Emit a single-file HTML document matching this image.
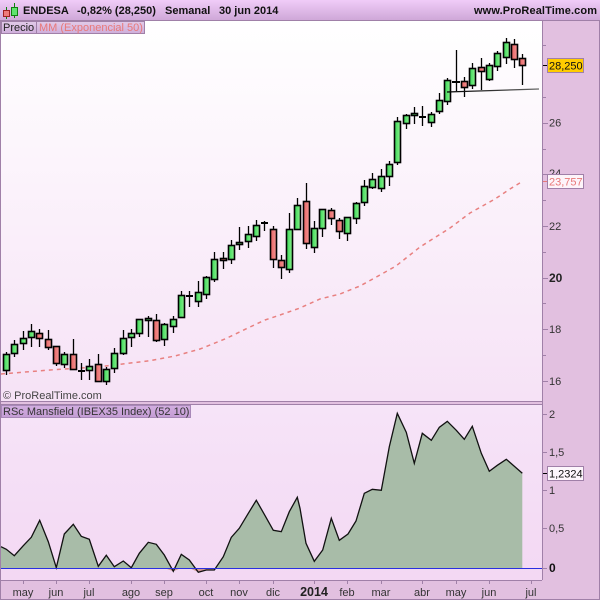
<!DOCTYPE html>
<html><head><meta charset="utf-8"><style>
html,body{margin:0;padding:0;background:#e2c0e0}
svg{display:block}
text{font-family:"Liberation Sans",sans-serif;font-size:11px;fill:#222}
.b{font-weight:bold;fill:#111}
.g{fill:url(#gg);stroke:#000;stroke-width:1.6}
.r{fill:url(#rr);stroke:#000;stroke-width:1.6}
.g rect,.r rect{shape-rendering:auto}
.w{stroke:#000;fill:none;stroke-width:1.3;shape-rendering:auto}
.t{stroke:#a080a8;fill:none}
.x{text-anchor:middle;fill:#333}
</style></head><body>
<svg width="600" height="600" viewBox="0 0 600 600" xmlns="http://www.w3.org/2000/svg" shape-rendering="crispEdges">
<defs>
<linearGradient id="gg" x1="0" y1="0" x2="1" y2="0"><stop offset="0" stop-color="#38d858"/><stop offset="1" stop-color="#8cf08c"/></linearGradient>
<linearGradient id="rr" x1="0" y1="0" x2="1" y2="0"><stop offset="0" stop-color="#e86464"/><stop offset="1" stop-color="#f49494"/></linearGradient>
<linearGradient id="hd" x1="0" y1="0" x2="0" y2="1"><stop offset="0" stop-color="#f0ccf8"/><stop offset="1" stop-color="#cfa8d8"/></linearGradient>
<linearGradient id="mb" x1="0" y1="0" x2="0" y2="1"><stop offset="0" stop-color="#ffffff"/><stop offset="1" stop-color="#f6e2f6"/></linearGradient>
<linearGradient id="pb" x1="0" y1="0" x2="0" y2="1"><stop offset="0" stop-color="#f6e4f8"/><stop offset="1" stop-color="#f3d8f3"/></linearGradient>
<linearGradient id="lg" x1="0" y1="0" x2="0" y2="1"><stop offset="0" stop-color="#e2cae8"/><stop offset="1" stop-color="#ceaedb"/></linearGradient>
<linearGradient id="rs" x1="0" y1="0" x2="0" y2="1"><stop offset="0" stop-color="#d2aee0"/><stop offset="1" stop-color="#c49cd4"/></linearGradient>
<linearGradient id="tl" x1="0" y1="0" x2="1" y2="0"><stop offset="0" stop-color="#000"/><stop offset="1" stop-color="#666"/></linearGradient>
<clipPath id="up"><rect x="0" y="404" width="542" height="164"/></clipPath>
<clipPath id="dn"><rect x="0" y="568" width="542" height="12"/></clipPath>
</defs>
<rect width="600" height="600" fill="#e2c0e0"/>
<rect x="0" y="0" width="600" height="20" fill="url(#hd)"/>
<path d="M0 20.5H600" stroke="#a080a8"/>
<rect x="1" y="21" width="541" height="380" fill="url(#mb)"/>
<rect x="1" y="405" width="541" height="175" fill="url(#pb)"/>
<path d="M0.5 20V600M542.5 20V580M599.5 20V600M0 401.5H542M0 404.5H542M0 580.5H542M0 599.5H600" stroke="#a080a8"/>

<!-- header icon -->
<path d="M6.5 7V19M14.5 3V18" stroke="#108010" fill="none"/>
<rect x="3.5" y="10.5" width="6" height="6" fill="#ee7b7b" stroke="#a02020"/>
<rect x="11.5" y="7.5" width="6" height="8" fill="#5fe36f" stroke="#108010"/>
<g shape-rendering="auto">
<text class="b" x="23" y="14">ENDESA</text>
<text class="b" x="77" y="14">-0,82% (28,250)</text>
<text class="b" x="165" y="14">Semanal</text>
<text class="b" x="219" y="14">30 jun 2014</text>
<text class="b" x="474" y="14" textLength="123">www.ProRealTime.com</text>
</g>

<!-- legends -->
<rect x="1.5" y="21.5" width="35" height="12" fill="url(#lg)" stroke="#a080a8"/>
<rect x="36.5" y="21.5" width="108" height="12" fill="url(#lg)" stroke="#a080a8"/>
<g shape-rendering="auto">
<text x="3" y="31">Precio</text>
<text x="39" y="31" style="fill:#e87878">MM (Exponencial 50)</text>
<text x="3" y="399" style="fill:#444">© ProRealTime.com</text>
</g>

<!-- moving average -->
<path shape-rendering="auto" fill="none" stroke="#e88080" stroke-width="1.5" stroke-dasharray="4 4" d="M1 374L50 370L100 366.7L150 360.7L175 356L200 349L225 339L250 327L265 320L280 315L300 308L320 299L340 294L360 286L380 275L396 266L420 247L450 228L470 213L495 199L510 189L523 181"/>

<!-- candles -->
<path class="w" d="M6.5 352V375M14.5 340V357M23.5 331V350M31.5 324V347M39.5 329V347M48.5 330V350M56.5 346V366M64.5 352V368M73.5 339V370M81.5 363V380M89.5 359V380M98.5 354V382M106.5 367V385M114.5 348V373M123.5 330V355M131.5 329V347M139.5 319V337M148.5 316V337M156.5 314V342M164.5 323V346M173.5 316V333M181.5 291V318M189.5 291V307M198.5 281V307M206.5 276V299M214.5 252V282M223.5 252V269M231.5 240V264M239.5 227V250M248.5 226V248M256.5 220V241M264.5 221V231M273.5 226V268M281.5 255V279M289.5 213V273M297.5 198V230M306.5 183V249M314.5 221V253M322.5 209V237M331.5 208V225M339.5 218V239M347.5 217V241M356.5 202V224M364.5 180V206M372.5 173V189M381.5 169V192M389.5 161V186M397.5 117V165M406.5 114V129M414.5 107V124M422.5 106V126M431.5 112V127M439.5 93V114M447.5 78V105M456.5 50V91M464.5 77V97M472.5 63V89M481.5 58V90M489.5 63V81M497.5 51V71M506.5 38V64M514.5 39V68M522.5 54V85"/>
<path stroke="#000" stroke-width="2" d="M78 371H85M186 296H193M261 223H268M419 117H426M452 82H460"/>
<g class="g">
<rect x="3.5" y="354.5" width="6" height="16"/><rect x="11.5" y="344.5" width="6" height="9"/><rect x="20.5" y="338.5" width="6" height="5"/><rect x="28.5" y="331.5" width="6" height="6"/>
<rect x="61.5" y="354.5" width="6" height="10"/><rect x="86.5" y="366.5" width="6" height="4"/><rect x="103.5" y="369.5" width="6" height="12"/><rect x="111.5" y="353.5" width="6" height="15"/><rect x="120.5" y="338.5" width="6" height="15"/><rect x="128.5" y="333.5" width="6" height="4"/><rect x="136.5" y="319.5" width="6" height="14"/><rect x="145.5" y="318.5" width="6" height="2"/>
<rect x="161.5" y="324.5" width="6" height="15"/><rect x="170.5" y="319.5" width="6" height="7"/><rect x="178.5" y="295.5" width="6" height="22"/><rect x="195.5" y="292.5" width="6" height="9"/><rect x="203.5" y="277.5" width="6" height="17"/><rect x="211.5" y="259.5" width="6" height="20"/><rect x="228.5" y="245.5" width="6" height="14"/><rect x="236.5" y="242.5" width="6" height="2"/><rect x="245.5" y="234.5" width="6" height="7"/><rect x="253.5" y="225.5" width="6" height="11"/>
<rect x="286.5" y="229.5" width="6" height="40"/><rect x="294.5" y="205.5" width="6" height="24"/><rect x="311.5" y="228.5" width="6" height="19"/><rect x="319.5" y="209.5" width="6" height="19"/><rect x="344.5" y="217.5" width="6" height="16"/><rect x="353.5" y="203.5" width="6" height="15"/><rect x="361.5" y="186.5" width="6" height="16"/><rect x="369.5" y="179.5" width="6" height="8"/><rect x="378.5" y="176.5" width="6" height="12"/><rect x="386.5" y="164.5" width="6" height="12"/><rect x="394.5" y="121.5" width="6" height="41"/><rect x="403.5" y="115.5" width="6" height="8"/><rect x="411.5" y="113.5" width="6" height="2"/><rect x="428.5" y="114.5" width="6" height="8"/><rect x="436.5" y="100.5" width="6" height="11"/><rect x="444.5" y="80.5" width="6" height="21"/><rect x="469.5" y="68.5" width="6" height="17"/><rect x="486.5" y="65.5" width="6" height="14"/><rect x="494.5" y="53.5" width="6" height="13"/><rect x="503.5" y="42.5" width="6" height="15"/>
</g>
<g class="r">
<rect x="36.5" y="333.5" width="6" height="5"/><rect x="45.5" y="339.5" width="6" height="8"/><rect x="53.5" y="346.5" width="6" height="17"/><rect x="70.5" y="354.5" width="6" height="15"/><rect x="95.5" y="364.5" width="6" height="17"/><rect x="153.5" y="320.5" width="6" height="20"/><rect x="220.5" y="258.5" width="6" height="2"/><rect x="270.5" y="229.5" width="6" height="30"/><rect x="278.5" y="260.5" width="6" height="7"/><rect x="303.5" y="201.5" width="6" height="42"/><rect x="328.5" y="210.5" width="6" height="8"/><rect x="336.5" y="220.5" width="6" height="11"/><rect x="461.5" y="81.5" width="6" height="6"/><rect x="478.5" y="67.5" width="6" height="4"/><rect x="511.5" y="44.5" width="6" height="15"/><rect x="519.5" y="58.5" width="6" height="7"/>
</g>

<!-- trend line -->
<path shape-rendering="auto" d="M447 92L539 89" stroke="url(#tl)" stroke-width="1.3" fill="none"/>

<!-- price axis -->
<path class="t" d="M543 45.5H546M543 97.5H546M543 149.5H546M543 123.5H548M543 174.5H548M543 226.5H548M543 278.5H548M543 329.5H548M543 381.5H548M543 200.5H546M543 252.5H546M543 303.5H546M543 355.5H546"/>
<g shape-rendering="auto">
<text x="549" y="126.5" style="fill:#333">26</text>
<text x="549" y="177" style="fill:#333">24</text>
<text x="549" y="230" style="fill:#333">22</text>
<text class="b" x="549" y="282" style="fill:#222;font-size:12px">20</text>
<text x="549" y="333" style="fill:#333">18</text>
<text x="549" y="385" style="fill:#333">16</text>
</g>
<path d="M543 65.5H548" stroke="#000"/>
<path d="M543 181.5H548" stroke="#e87878"/>
<rect x="547.5" y="58.5" width="36" height="14" fill="#ffcc00" stroke="#a080a8"/>
<rect x="547.5" y="174.5" width="36" height="14" fill="#fdf4fa" stroke="#a080a8"/>
<g shape-rendering="auto">
<text x="549" y="69.5" style="fill:#111">28,250</text>
<text x="549" y="185.5" style="fill:#e87878">23,757</text>
</g>

<!-- indicator label -->
<rect x="1.5" y="405.5" width="189" height="12" fill="url(#rs)" stroke="#a888b8"/>
<text shape-rendering="auto" x="3" y="415" style="fill:#333">RSc Mansfield (IBEX35 Index) (52 10)</text>

<!-- indicator -->
<g shape-rendering="auto">
<polygon clip-path="url(#up)" fill="#a8bca8" points="1,568.5 1,546.7 6.3,549.3 14.3,555.7 23.3,545.7 31.3,537.3 39.7,520.3 48.3,541.7 56.3,567.7 64.3,534 73.3,524.3 81.3,536.3 89.3,539.3 98.3,566.3 106.3,555.3 114.3,566.7 123.3,561 131.3,567.7 139.3,553.3 148.3,542.3 156.3,544.3 164.3,555 173.3,571.3 181.3,554.3 189.3,560 198.3,572.3 206.3,570 214.3,570 223.3,556.7 231.3,537.3 239.3,528.3 248.3,513.3 256.3,500.3 264.3,514.3 273.3,530.3 281.3,531.7 289.3,511.7 297.3,497.3 300,508.3 306,543.3 314.3,561.3 322.7,550 331.3,518.3 339.3,540.3 348,534 356,521 364.3,493.3 372.3,489.3 381.3,490.3 389.3,446.7 397.3,413.3 406.3,432.3 414.3,463.3 422.3,433.3 431.3,440.3 439.3,427.3 447.3,421.3 456.3,430.3 464.3,439.3 472.3,426.3 481.3,453.3 489.3,471.3 497.3,465.3 506.3,459.3 514.3,466.3 522.3,473.3 522.3,568.5"/>
<polygon clip-path="url(#dn)" fill="#d09898" points="164.3,568 173.3,571.3 181.3,568 189.3,568 198.3,572.3 206.3,570 214.3,570 218,568"/>
<polyline fill="none" stroke="#111" stroke-width="1.3" points="1,546.7 6.3,549.3 14.3,555.7 23.3,545.7 31.3,537.3 39.7,520.3 48.3,541.7 56.3,567.7 64.3,534 73.3,524.3 81.3,536.3 89.3,539.3 98.3,566.3 106.3,555.3 114.3,566.7 123.3,561 131.3,567.7 139.3,553.3 148.3,542.3 156.3,544.3 164.3,555 173.3,571.3 181.3,554.3 189.3,560 198.3,572.3 206.3,570 214.3,570 223.3,556.7 231.3,537.3 239.3,528.3 248.3,513.3 256.3,500.3 264.3,514.3 273.3,530.3 281.3,531.7 289.3,511.7 297.3,497.3 300,508.3 306,543.3 314.3,561.3 322.7,550 331.3,518.3 339.3,540.3 348,534 356,521 364.3,493.3 372.3,489.3 381.3,490.3 389.3,446.7 397.3,413.3 406.3,432.3 414.3,463.3 422.3,433.3 431.3,440.3 439.3,427.3 447.3,421.3 456.3,430.3 464.3,439.3 472.3,426.3 481.3,453.3 489.3,471.3 497.3,465.3 506.3,459.3 514.3,466.3 522.3,473.3"/>
</g>
<path d="M1 568.5H542" stroke="#2a30e0"/>

<!-- indicator axis -->
<path class="t" d="M543 414.5H547M543 452.5H547M543 490.5H547M543 528.5H547"/>
<path d="M543 568.5H547" stroke="#a080a8"/>
<path d="M543 473.5H548" stroke="#000"/>
<rect x="547.5" y="466.5" width="36" height="14" fill="#fdf6fc" stroke="#a080a8"/>
<g shape-rendering="auto">
<text x="549" y="418" style="fill:#333">2</text>
<text x="549" y="456" style="fill:#333">1,5</text>
<text x="549" y="494" style="fill:#333">1</text>
<text x="549" y="532" style="fill:#333">0,5</text>
<text class="b" x="549" y="572" style="font-size:12px">0</text>
<text x="549" y="477.5" style="fill:#111">1,2324</text>
</g>

<!-- date axis -->
<path class="t" d="M23.5 581V584M56.5 581V584M89.5 581V584M131.5 581V584M164.5 581V584M206.5 581V584M239.5 581V584M273.5 581V584M314.5 581V584M347.5 581V584M381.5 581V584M422.5 581V584M456.5 581V584M489.5 581V584M531.5 581V584"/>
<g shape-rendering="auto">
<text class="x" x="23" y="596">may</text>
<text class="x" x="56" y="596">jun</text>
<text class="x" x="89" y="596">jul</text>
<text class="x" x="131" y="596">ago</text>
<text class="x" x="164" y="596">sep</text>
<text class="x" x="206" y="596">oct</text>
<text class="x" x="239" y="596">nov</text>
<text class="x" x="273" y="596">dic</text>
<text class="b x" x="314" y="596" style="fill:#222;font-size:12.5px">2014</text>
<text class="x" x="347" y="596">feb</text>
<text class="x" x="381" y="596">mar</text>
<text class="x" x="422" y="596">abr</text>
<text class="x" x="456" y="596">may</text>
<text class="x" x="489" y="596">jun</text>
<text class="x" x="531" y="596">jul</text>
</g>
</svg>
</body></html>
